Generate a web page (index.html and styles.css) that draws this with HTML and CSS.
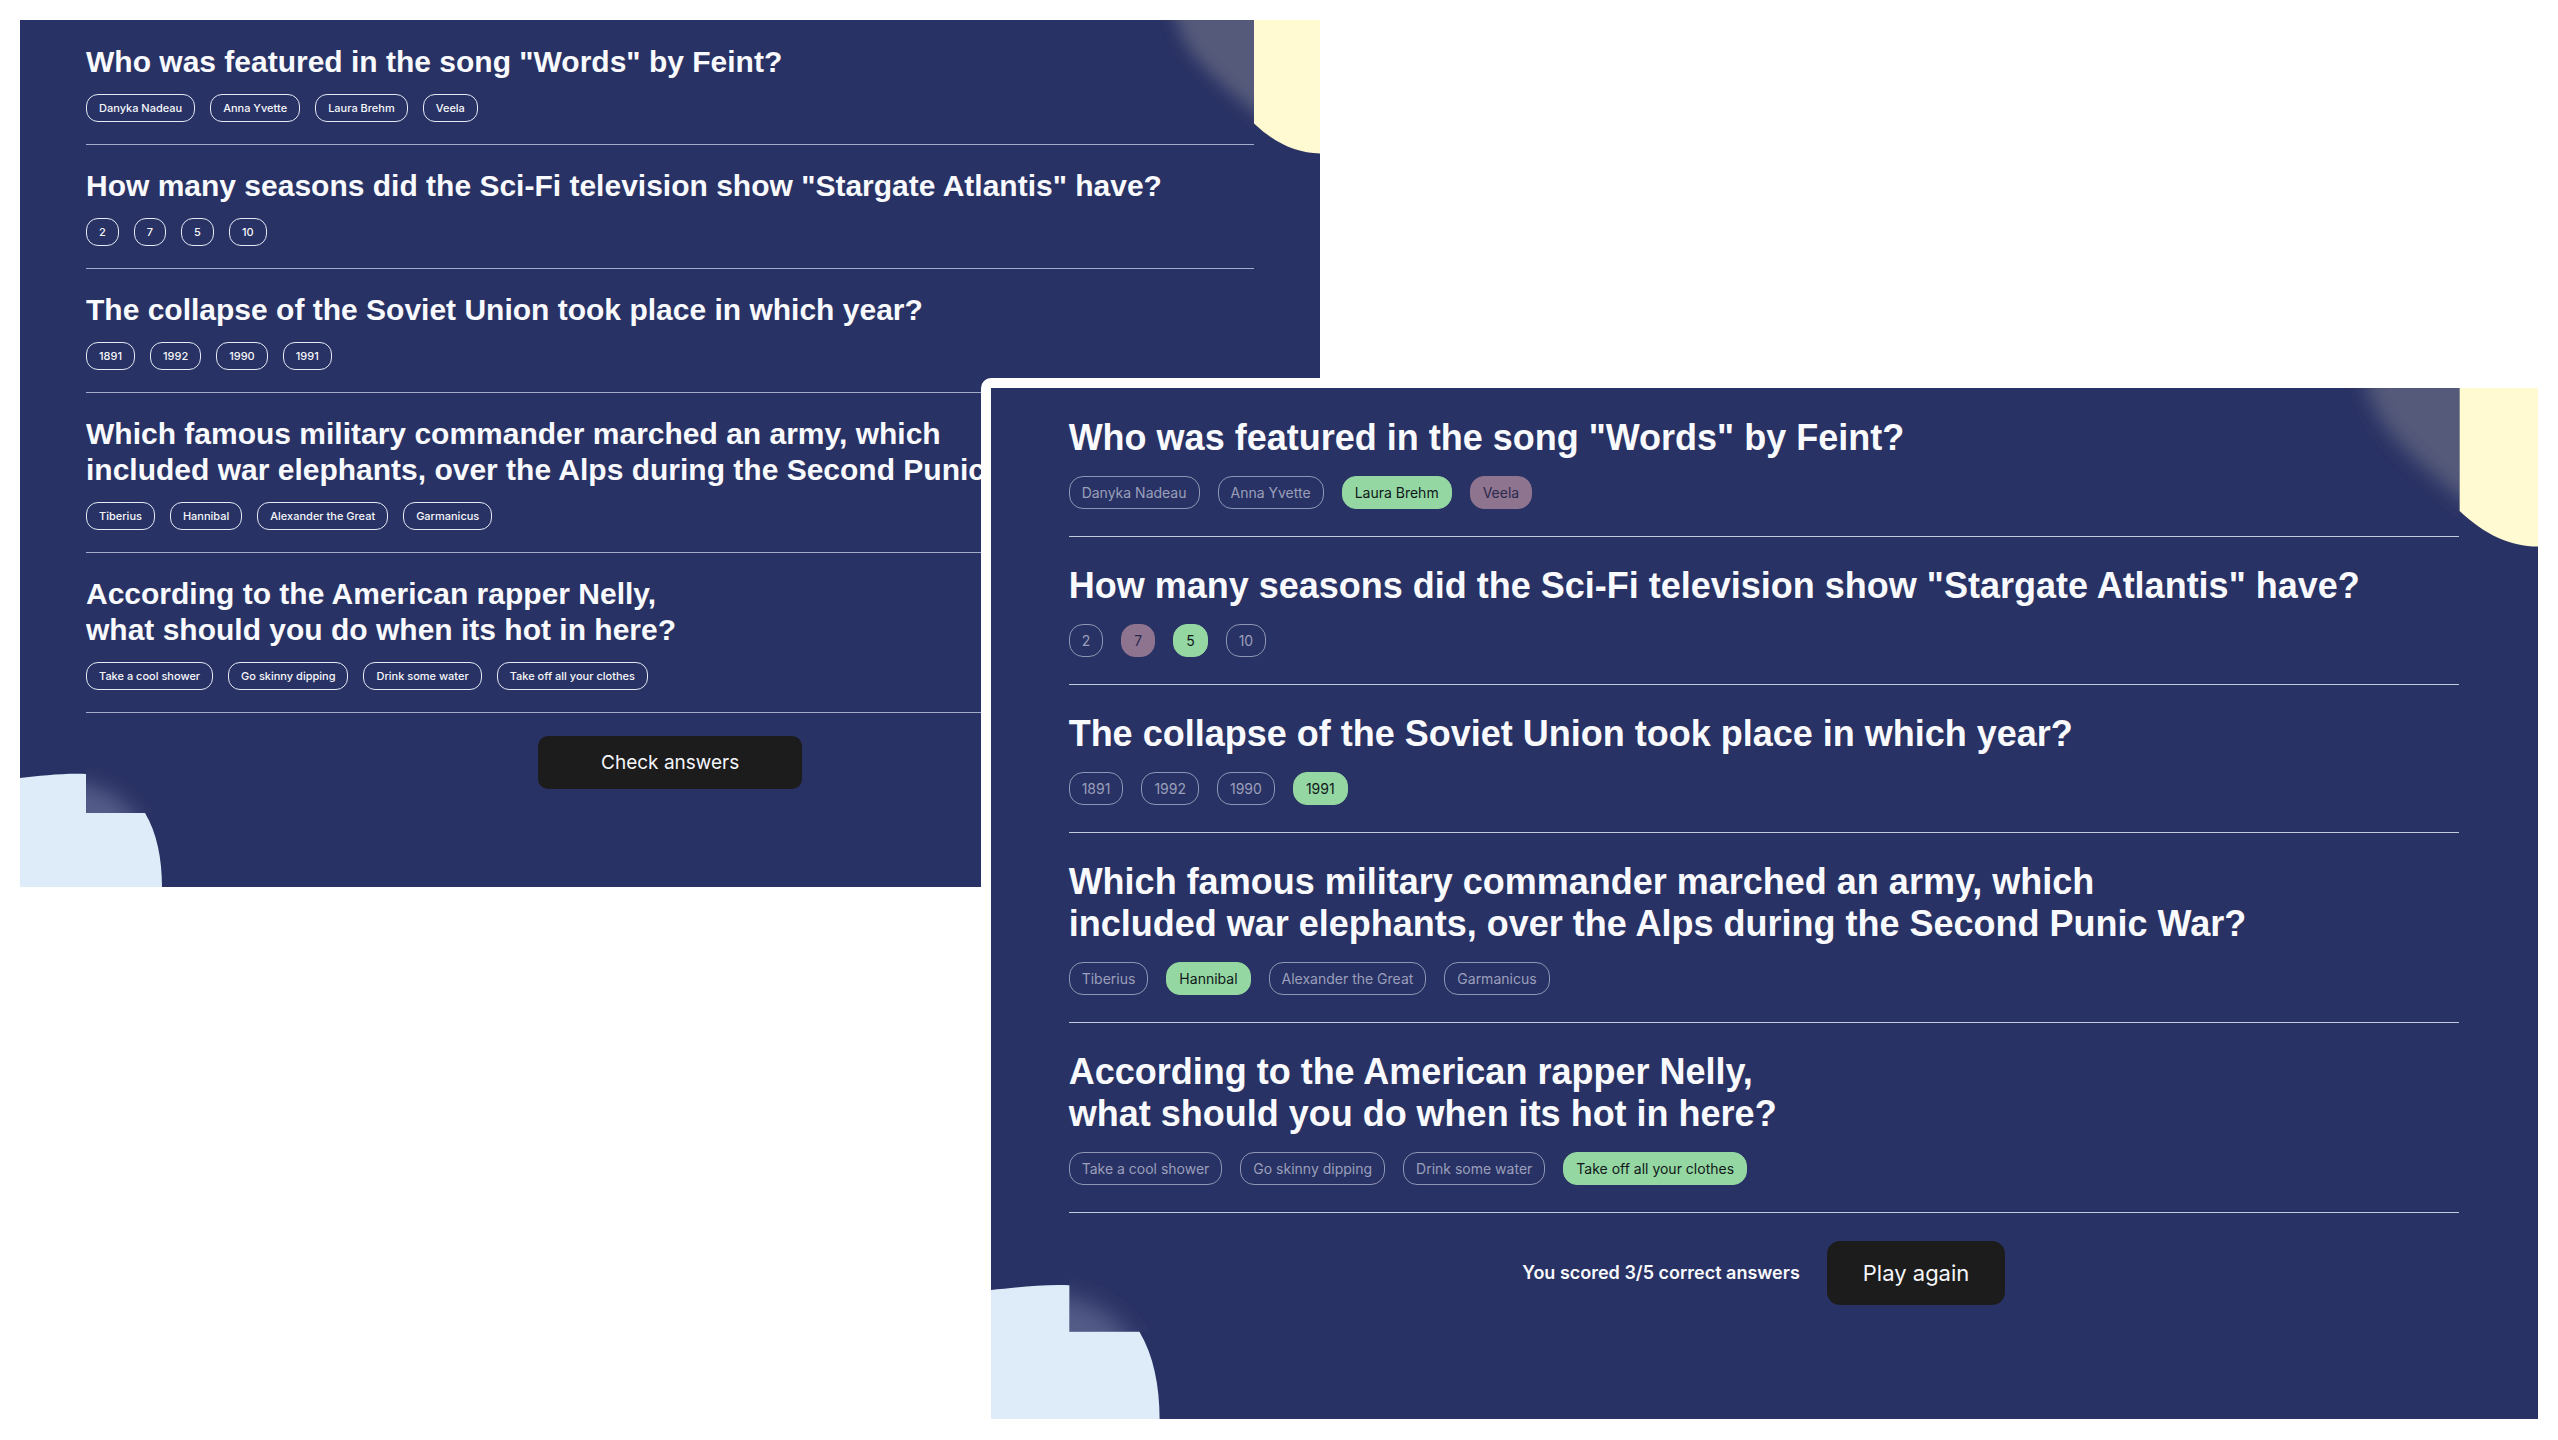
FILE: index.html
```html
<!DOCTYPE html>
<html lang="en">
<head>
<meta charset="utf-8">
<title>Quizzical</title>
<link rel="stylesheet" href="styles.css">
</head>
<body>
<div class="stage">

  <main class="screen screen-play">
    <svg class="blob blob-yellow" viewBox="0 0 160 140" aria-hidden="true">
      <defs>
        <clipPath id="clip-yellow"><rect width="94" height="140"/></clipPath>
        <filter id="soft" x="-30%" y="-30%" width="160%" height="160%"><feGaussianBlur stdDeviation="8"/></filter>
      </defs>
      <g clip-path="url(#clip-yellow)"><path d="M8 -40C12 -10 18 12 30 30C44 50 72 74 104 100H180V-40Z" fill="#555a7a" filter="url(#soft)"/></g>
      <path d="M94 0H160V133.500C136 133 116 124 94 103.500Z" fill="#fffad1"/>
    </svg>
    <svg class="blob blob-blue" viewBox="0 0 160 120" aria-hidden="true">
      <defs>
        <clipPath id="clip-blue"><rect x="66" width="94" height="46"/></clipPath>
        <filter id="softer" x="-40%" y="-40%" width="180%" height="180%"><feGaussianBlur stdDeviation="10"/></filter>
      </defs>
      <g clip-path="url(#clip-blue)"><path d="M20 14C70 12 100 24 120 56V120H20Z" fill="#525c87" filter="url(#softer)"/></g>
      <path d="M0 11C20 9 44 6 66 7V46H125C137 66 142 92 142 120H0Z" fill="#deebf8"/>
    </svg>

    <section class="question">
      <h2>Who was featured in the song "Words" by Feint?</h2>
      <div class="options"><button>Danyka Nadeau</button><button>Anna Yvette</button><button>Laura Brehm</button><button>Veela</button></div>
    </section>
    <section class="question">
      <h2>How many seasons did the Sci-Fi television show "Stargate Atlantis" have?</h2>
      <div class="options"><button>2</button><button>7</button><button>5</button><button>10</button></div>
    </section>
    <section class="question">
      <h2>The collapse of the Soviet Union took place in which year?</h2>
      <div class="options"><button>1891</button><button>1992</button><button>1990</button><button>1991</button></div>
    </section>
    <section class="question">
      <h2>Which famous military commander marched an army, which<br>included war elephants, over the Alps during the Second Punic War?</h2>
      <div class="options"><button>Tiberius</button><button>Hannibal</button><button>Alexander the Great</button><button>Garmanicus</button></div>
    </section>
    <section class="question">
      <h2>According to the American rapper Nelly,<br>what should you do when its hot in here?</h2>
      <div class="options"><button>Take a cool shower</button><button>Go skinny dipping</button><button>Drink some water</button><button>Take off all your clothes</button></div>
    </section>
    <div class="result"><button class="action">Check answers</button></div>
  </main>

  <main class="screen screen-scored">
    <svg class="blob blob-yellow" viewBox="0 0 160 140" aria-hidden="true">
      <g clip-path="url(#clip-yellow)"><path d="M8 -40C12 -10 18 12 30 30C44 50 72 74 104 100H180V-40Z" fill="#555a7a" filter="url(#soft)"/></g>
      <path d="M94 0H160V133.500C136 133 116 124 94 103.500Z" fill="#fffad1"/>
    </svg>
    <svg class="blob blob-blue" viewBox="0 0 160 120" aria-hidden="true">
      <g clip-path="url(#clip-blue)"><path d="M20 14C70 12 100 24 120 56V120H20Z" fill="#525c87" filter="url(#softer)"/></g>
      <path d="M0 11C20 9 44 6 66 7V46H125C137 66 142 92 142 120H0Z" fill="#deebf8"/>
    </svg>

    <section class="question">
      <h2>Who was featured in the song "Words" by Feint?</h2>
      <div class="options"><button disabled>Danyka Nadeau</button><button disabled>Anna Yvette</button><button disabled class="correct">Laura Brehm</button><button disabled class="wrong">Veela</button></div>
    </section>
    <section class="question">
      <h2>How many seasons did the Sci-Fi television show "Stargate Atlantis" have?</h2>
      <div class="options"><button disabled>2</button><button disabled class="wrong">7</button><button disabled class="correct">5</button><button disabled>10</button></div>
    </section>
    <section class="question">
      <h2>The collapse of the Soviet Union took place in which year?</h2>
      <div class="options"><button disabled>1891</button><button disabled>1992</button><button disabled>1990</button><button disabled class="correct">1991</button></div>
    </section>
    <section class="question">
      <h2>Which famous military commander marched an army, which<br>included war elephants, over the Alps during the Second Punic War?</h2>
      <div class="options"><button disabled>Tiberius</button><button disabled class="correct">Hannibal</button><button disabled>Alexander the Great</button><button disabled>Garmanicus</button></div>
    </section>
    <section class="question">
      <h2>According to the American rapper Nelly,<br>what should you do when its hot in here?</h2>
      <div class="options"><button disabled>Take a cool shower</button><button disabled>Go skinny dipping</button><button disabled>Drink some water</button><button disabled class="correct">Take off all your clothes</button></div>
    </section>
    <div class="result"><p class="score">You scored 3/5 correct answers</p><button class="action">Play again</button></div>
  </main>

</div>
</body>
</html>
```
FILE: styles.css
```css
* { box-sizing: border-box; }

body {
  margin: 0;
  background: #fff;
  font-family: Inter, "Liberation Sans", sans-serif;
}

/* The two screens share one grid cell and overlap */
.stage {
  display: grid;
  padding: 20px 10px 12px 20px;
}

.screen {
  position: relative;
  grid-area: 1 / 1;
  align-self: start;
  background: #293264;
  background-clip: padding-box;
  color: #f9fafd;
}

.screen-play {
  --heading: 30px;
  --heading-line: 36px;
  --chip-text: 11px;
  --chip-weight: 500;
  --chip-height: 28px;
  --chip-pad: 12px;
  --chip-radius: 12px;
  --chip-gap: 15px;
  --space-heading: 14px;
  --space-above: 23px;
  --space-below: 22px;
  --line: #a3abc9;
  width: 51.44%;
  padding: 1px 66px 98px;
}

.screen-scored {
  --heading: 36px;
  --heading-line: 42px;
  --chip-text: 14px;
  --chip-weight: 400;
  --chip-height: 33px;
  --chip-pad: 12px;
  --chip-radius: 14px;
  --chip-gap: 18px;
  --space-heading: 17px;
  --space-above: 28px;
  --space-below: 27px;
  --line: #c3cae0;
  justify-self: end;
  width: 62%;
  margin-top: 358px;
  padding: 1px 79px 114px 78px;
  border: 10px solid #fff;
  border-radius: 10px;
}

.question {
  position: relative;
  padding: var(--space-above) 0 var(--space-below);
  border-bottom: 1px solid var(--line);
}

.question h2 {
  margin: 0 0 var(--space-heading);
  font: 700 var(--heading)/var(--heading-line) "Liberation Sans", Arial, sans-serif;
  white-space: nowrap;
}

.options {
  display: flex;
  gap: var(--chip-gap);
}

.options button {
  height: var(--chip-height);
  padding: 0 var(--chip-pad);
  border: 1px solid #e4e9f4;
  border-radius: var(--chip-radius);
  background: transparent;
  color: #f5f7fb;
  font: var(--chip-weight) var(--chip-text)/16px Inter, sans-serif;
}

.options button:disabled {
  border-color: #8f96b4;
  color: #9a9fbb;
}

.options button.correct {
  border-color: #94d7a2;
  background: #94d7a2;
  color: #10181a;
}

.options button.wrong {
  border-color: #8f7490;
  background: #8f7490;
  color: #292a4c;
}

.result {
  position: relative;
  display: flex;
  align-items: center;
  justify-content: center;
  gap: 27px;
  padding-top: var(--space-above);
}

.score {
  margin: 0;
  font-size: 18px;
  line-height: 24px;
  font-weight: 600;
}

.action {
  height: 53px;
  padding: 0 63px;
  border: 0;
  border-radius: 10px;
  background: #1c1c1c;
  color: #f5f7fb;
  font: 400 19px/24px Inter, sans-serif;
}

.screen-scored .action {
  height: 64px;
  padding: 0 36px;
  border-radius: 13px;
  font-size: 22px;
}

/* Corner decoration */
.blob { position: absolute; }
.blob-yellow { top: 0; right: 0; width: 160px; }
.blob-blue { bottom: 0; left: 0; width: 160px; }
.screen-scored .blob { width: 190px; }
```
